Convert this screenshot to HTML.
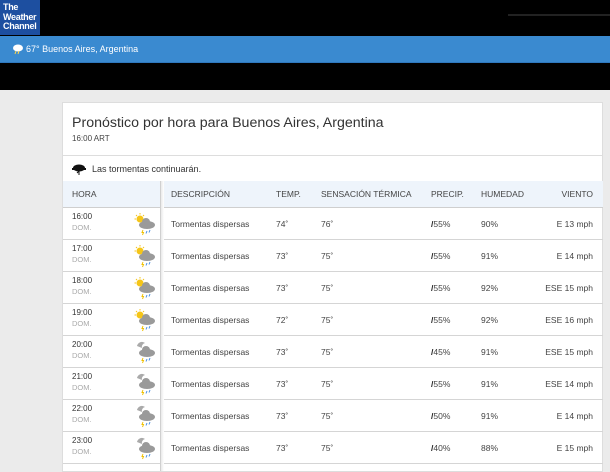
<!DOCTYPE html>
<html><head><meta charset="utf-8"><style>
*{margin:0;padding:0;box-sizing:border-box}
body{width:610px;height:466px;overflow:hidden;background:#ebebeb;font-family:"Liberation Sans",sans-serif;position:relative}
.a{position:absolute}
.top{left:0;top:0;width:610px;height:36px;background:#000}
.logo{left:0;top:0;width:40px;height:35px;background:#1d4fa0;color:#fff;font-weight:bold;font-size:9px;line-height:9.5px;padding:3px 0 0 3px;letter-spacing:-0.3px}
.bar{left:0;top:36px;width:610px;height:27px;background:#3a8ad0;border-bottom:1px solid #2f78be;color:#fff;font-size:9px;line-height:27px;padding-left:26px}
.blk{left:0;top:63px;width:610px;height:27px;background:#000}
.card{left:62px;top:102px;width:541px;height:370px;background:#fff;border:1px solid #ddd}
.t{font-size:14.2px;color:#333;left:72px;top:115px}
.s{font-size:8px;color:#444;left:72px;top:134px}
.ln{height:1px;background:#ddd;left:63px;width:540px}
.hd{left:63px;top:181px;width:540px;height:26px;background:#eef4fb;font-size:8.5px;color:#444}
.hd span,.r span{position:absolute}
.r{left:63px;width:540px;height:32px;border-bottom:1px solid #d5d5d5;font-size:8.5px;color:#444}
.sh{left:160px;top:181px;width:4px;height:290px;background:linear-gradient(to right,#e2e2e2,#fff)}
.dv{left:160px;top:181px;width:1px;height:290px;background:#d0d0d0}
</style></head><body>
<div class="a top"></div>
<div class="a" style="left:508px;top:14px;width:102px;height:2px;background:#222"></div>
<div class="a logo">The<br>Weather<br>Channel</div>
<div class="a bar">67° Buenos Aires, Argentina</div>
<svg class="a" style="left:11px;top:43px" width="13" height="12"><ellipse cx="7" cy="5" rx="5" ry="3.5" fill="#fff"/><path d="M5 8l-1 3M8 8l-1 3" stroke="#ffd54a" stroke-width="1"/></svg>
<div class="a blk"></div>
<div class="a card"></div>
<div class="a t">Pronóstico por hora para Buenos Aires, Argentina</div>
<div class="a s">16:00 ART</div>
<div class="a ln" style="top:155px"></div>
<svg class="a" style="left:72px;top:163px" width="14" height="13"><ellipse cx="7" cy="5" rx="6" ry="3.5" fill="#111"/><rect x="0" y="5" width="14" height="2" fill="#111"/><path d="M7 7v5M5 10l2-2" stroke="#111" stroke-width="1"/></svg>
<div class="a" style="left:92px;top:164px;font-size:9px;color:#333">Las tormentas continuarán.</div>
<div class="a hd"><span style="left:9px;top:8px">HORA</span><span style="left:108px;top:8px">DESCRIPCIÓN</span><span style="left:213px;top:8px">TEMP.</span><span style="left:258px;top:8px">SENSACIÓN TÉRMICA</span><span style="left:368px;top:8px">PRECIP.</span><span style="left:418px;top:8px">HUMEDAD</span><span style="right:10px;top:8px">VIENTO</span></div>
<div class="a ln" style="top:207px;background:#cfcfcf"></div>
<div id="rows"></div>
<div class="a sh"></div><div class="a dv"></div>
<script>
var d=[["16:00","74","76","55","90","E 13 mph",1],["17:00","73","75","55","91","E 14 mph",1],["18:00","73","75","55","92","ESE 15 mph",1],["19:00","72","75","55","92","ESE 16 mph",1],["20:00","73","75","45","91","ESE 15 mph",0],["21:00","73","75","55","91","ESE 14 mph",0],["22:00","73","75","50","91","E 14 mph",0],["23:00","73","75","40","88","E 15 mph",0]];
var h="";d.forEach(function(r,i){var y=208+i*32;
var sun=r[6]?'<circle cx="6" cy="7" r="3.5" fill="#f5c518"/><path d="M6 1v1.5M0.5 7h1.5M2 3l1 1M10 3l-1 1" stroke="#f5c518"/>':'<path d="M3 6a5 5 0 0 1 8-3a4 4 0 0 0-3 5z" fill="#aaa"/>';
h+='<div class="a r" style="top:'+y+'px"><span style="left:9px;top:4px;font-size:8px;color:#333">'+r[0]+'</span><span style="left:9px;top:15px;font-size:7.5px;color:#aaa">DOM.</span>'+
'<svg style="position:absolute;left:71px;top:4px" width="22" height="24">'+sun+'<ellipse cx="13" cy="13" rx="8" ry="4" fill="#9a9a9a"/><circle cx="12" cy="10" r="4" fill="#9a9a9a"/><path d="M9 18l-1 2.5h1.5l-1 2.5" stroke="#f0c000" fill="none"/><path d="M13 19l-1 2.5M16 18l-1 2.5" stroke="#4a90e2"/></svg>'+
'<span style="left:108px;top:11px">Tormentas dispersas</span><span style="left:213px;top:11px">'+r[1]+'˚</span><span style="left:258px;top:11px">'+r[2]+'˚</span><span style="left:368px;top:11px"><b style="color:#222">/</b>'+r[3]+'%</span><span style="left:418px;top:11px">'+r[4]+'%</span><span style="right:10px;top:11px">'+r[5]+'</span></div>';});
document.getElementById("rows").innerHTML=h;
</script>
</body></html>
